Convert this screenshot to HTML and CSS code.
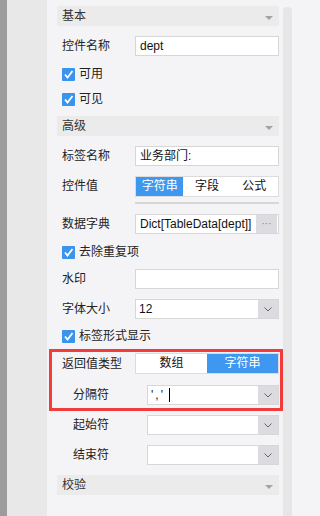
FILE: index.html
```html
<!DOCTYPE html>
<html lang="zh">
<head>
<meta charset="utf-8">
<link rel="stylesheet" href="styles.css">
</head>
<body>
<div class="app">
  <div class="edge"></div>
  <div class="gutter"></div>
  <div class="panel">
    <div class="content">
      <div class="section-head"><span>基本</span><span class="tri"></span></div>
      <div class="row"><span class="lbl">控件名称</span><div class="input">dept</div></div>
      <div class="check-row"><span class="cb"><svg viewBox="0 0 13 13" width="13" height="13"><polyline points="3,6.5 5.5,9.5 10.5,3" fill="none" stroke="#fff" stroke-width="1.8"/></svg></span><span>可用</span></div>
      <div class="check-row"><span class="cb"><svg viewBox="0 0 13 13" width="13" height="13"><polyline points="3,6.5 5.5,9.5 10.5,3" fill="none" stroke="#fff" stroke-width="1.8"/></svg></span><span>可见</span></div>
      <div class="section-head"><span>高级</span><span class="tri"></span></div>
      <div class="row"><span class="lbl">标签名称</span><div class="input">业务部门:</div></div>
      <div class="row top">
        <span class="lbl tall">控件值</span>
        <div class="field-col">
          <div class="tabs"><span class="tab on">字符串</span><span class="tab">字段</span><span class="tab">公式</span></div>
          <div class="input gap"></div>
        </div>
      </div>
      <div class="row"><span class="lbl">数据字典</span><div class="input with-btn"><span class="val">Dict[TableData[dept]]</span><span class="more">···</span></div></div>
      <div class="check-row"><span class="cb"><svg viewBox="0 0 13 13" width="13" height="13"><polyline points="3,6.5 5.5,9.5 10.5,3" fill="none" stroke="#fff" stroke-width="1.8"/></svg></span><span>去除重复项</span></div>
      <div class="row"><span class="lbl">水印</span><div class="input"></div></div>
      <div class="row"><span class="lbl">字体大小</span><div class="select"><span class="val">12</span><span class="arrow"><svg viewBox="0 0 8 5" width="8" height="5"><polyline points="0.5,0.5 4,4 7.5,0.5" fill="none" stroke="#666" stroke-width="1"/></svg></span></div></div>
      <div class="check-row last"><span class="cb"><svg viewBox="0 0 13 13" width="13" height="13"><polyline points="3,6.5 5.5,9.5 10.5,3" fill="none" stroke="#fff" stroke-width="1.8"/></svg></span><span>标签形式显示</span></div>
      <div class="redbox">
        <div class="row first"><span class="lbl">返回值类型</span><div class="tabs"><span class="tab">数组</span><span class="tab on">字符串</span></div></div>
        <div class="row sub sep"><span class="lbl">分隔符</span><div class="select"><span class="val"><span class="sepval">','</span><span class="caret"></span></span><span class="arrow"><svg viewBox="0 0 8 5" width="8" height="5"><polyline points="0.5,0.5 4,4 7.5,0.5" fill="none" stroke="#666" stroke-width="1"/></svg></span></div></div>
      </div>
      <div class="row sub after-red"><span class="lbl">起始符</span><div class="select"><span class="val"></span><span class="arrow"><svg viewBox="0 0 8 5" width="8" height="5"><polyline points="0.5,0.5 4,4 7.5,0.5" fill="none" stroke="#666" stroke-width="1"/></svg></span></div></div>
      <div class="row sub"><span class="lbl">结束符</span><div class="select"><span class="val"></span><span class="arrow"><svg viewBox="0 0 8 5" width="8" height="5"><polyline points="0.5,0.5 4,4 7.5,0.5" fill="none" stroke="#666" stroke-width="1"/></svg></span></div></div>
      <div class="section-head"><span>校验</span><span class="tri"></span></div>
    </div>
    <div class="scrollbar"></div>
  </div>
</div>
</body>
</html>
```

FILE: styles.css
```css
html, body {
  margin: 0;
  padding: 0;
  height: 516px;
  overflow: hidden;
}
body {
  font-family: "Liberation Sans", "Noto Sans CJK SC", sans-serif;
  font-size: 12px;
  color: #222;
  background: #f4f4f6;
}
.app {
  display: flex;
  width: 293px;
  height: 516px;
}
.edge {
  width: 7px;
  background: #9c9c9c;
}
.gutter {
  width: 40px;
  background: #e8e8e8;
}
.panel {
  flex: 1;
  display: flex;
  background: #f4f4f6;
}
.content {
  width: 222px;
  margin-left: 10px;
  padding-top: 6px;
}
.scrollbar {
  width: 9px;
  margin-left: 4px;
  margin-top: 7px;
  background: #e6e6e6;
  border-radius: 4px 4px 0 0;
}
.section-head {
  height: 20px;
  background: #ebebeb;
  display: flex;
  align-items: center;
  justify-content: space-between;
  padding: 0 6px 0 5px;
  color: #333;
  line-height: 20px;
  margin-top: 10px;
}
.section-head:first-child {
  margin-top: 0;
}
.tri {
  width: 0;
  height: 0;
  border-left: 4px solid transparent;
  border-right: 4px solid transparent;
  border-top: 4px solid #a3a3a3;
  margin-top: 3px;
}
.row {
  display: flex;
  align-items: center;
  margin-top: 10px;
  padding-left: 5px;
}
.row.top {
  align-items: flex-start;
}
.lbl {
  width: 73px;
  flex: none;
  line-height: 20px;
  white-space: nowrap;
}
.lbl.tall {
  line-height: 21px;
}
.row.sub {
  padding-left: 16px;
}
.row.sub .lbl {
  width: 74px;
}
.input {
  flex: 1;
  box-sizing: border-box;
  height: 20px;
  border: 1px solid #d7d7d7;
  background: #fff;
  padding: 0 4px;
  line-height: 18px;
  color: #111;
  white-space: nowrap;
  overflow: hidden;
}
.input.gap {
  margin-top: 5px;
}
.field-col {
  flex: 1;
  display: flex;
  flex-direction: column;
}
.input.with-btn {
  display: flex;
  padding-right: 1px;
}
.with-btn .val {
  flex: 1;
  overflow: hidden;
}
.more {
  width: 21px;
  flex: none;
  background: #dcdce0;
  color: #808080;
  text-align: center;
  font-size: 10px;
  line-height: 18px;
}
.check-row {
  display: flex;
  align-items: center;
  height: 13px;
  margin-top: 12px;
  padding-left: 5px;
  line-height: 13px;
}
.cb {
  width: 13px;
  height: 13px;
  background: #3a93ec;
  border-radius: 1px;
  margin-right: 4px;
  display: flex;
}
.tabs {
  flex: 1;
  display: flex;
  box-sizing: border-box;
  height: 21px;
  border: 1px solid #dcdcdc;
  background: #fff;
}
.tab {
  flex: 1;
  text-align: center;
  line-height: 19px;
  color: #111;
}
.tab.on {
  background: #3f98f0;
  color: #fff;
}
.select {
  flex: 1;
  display: flex;
  box-sizing: border-box;
  height: 20px;
  border: 1px solid #d7d7d7;
  background: #fff;
}
.select .val {
  flex: 1;
  padding-left: 3px;
  line-height: 18px;
  color: #111;
  display: flex;
  align-items: center;
}
.sepval {
  letter-spacing: 2px;
}
.arrow {
  width: 20px;
  flex: none;
  background: #dcdce0;
  display: flex;
  align-items: center;
  justify-content: center;
}
.caret {
  display: inline-block;
  width: 1px;
  height: 14px;
  background: #000;
  margin-left: 4px;
}
.check-row.last {
  margin-top: 11px;
}
.redbox {
  margin: 6px -4px 0 -8px;
  border: 3px solid #f23b3d;
  padding: 1px 1px 3px 5px;
}
.redbox .row.first {
  margin-top: 0;
}
.redbox .row.sep {
  margin-top: 11px;
}
.row.after-red {
  margin-top: 4px;
}
```
